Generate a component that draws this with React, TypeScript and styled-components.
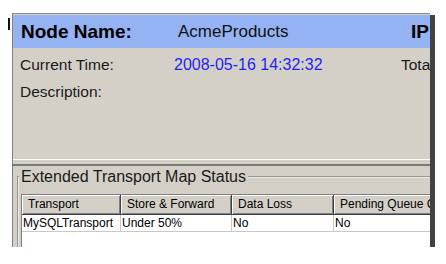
import React from 'react';
import styled, { createGlobalStyle } from 'styled-components';

const GlobalStyle = createGlobalStyle`
  html, body {
    margin: 0;
    padding: 0;
    background: #ffffff;
  }
  body {
    font-family: "Liberation Sans", Arial, sans-serif;
    color: #111;
  }
`;

const columns = [
  { title: 'Transport', width: 99 },
  { title: 'Store & Forward', width: 111 },
  { title: 'Data Loss', width: 102 },
  { title: 'Pending Queue Count', width: 140 },
];

const rows = [['MySQLTransport', 'Under 50%', 'No', 'No']];

export default function App() {
  return (
    <>
      <GlobalStyle />
      <Stage>
        <Edge />
        <Window>
          <Header>
            <HeadLabel>Node Name:</HeadLabel>
            <HeadValue>AcmeProducts</HeadValue>
            <HeadLabel>IP</HeadLabel>
          </Header>
          <Info>
            <InfoRow>
              <Label>Current Time:</Label>
              <Value $accent>2008-05-16 14:32:32</Value>
              <Label>Total</Label>
            </InfoRow>
            <InfoRow>
              <Label>Description:</Label>
            </InfoRow>
          </Info>
          <Splitter />
          <GroupArea>
            <Group>
              <Legend>Extended Transport Map Status</Legend>
              <ListView>
                <ListHead>
                  {columns.map((c) => (
                    <HeadCell key={c.title}>{c.title}</HeadCell>
                  ))}
                </ListHead>
                {rows.map((r, i) => (
                  <ListRow key={i}>
                    {r.map((v, j) => (
                      <Cell key={j}>{v}</Cell>
                    ))}
                  </ListRow>
                ))}
              </ListView>
            </Group>
          </GroupArea>
        </Window>
      </Stage>
    </>
  );
}

const Stage = styled.div`
  display: flex;
  align-items: flex-start;
  padding-top: 13px;
`;

const Edge = styled.div`
  width: 2px;
  height: 12px;
  margin: 5px 2px 0 8px;
  background: #111;
`;

const Window = styled.div`
  box-sizing: border-box;
  width: 418px;
  height: 234px;
  overflow: hidden;
  display: flex;
  flex-direction: column;
  background: #d4d0c8;
  border-top: 1px solid #8a8a8a;
  border-left: 1px solid #808080;
  padding-top: 1px;
  box-shadow: 5px 2px 0 #424242, 2px 5px 0 #424242;
`;

const Header = styled.div`
  flex-shrink: 0;
  display: grid;
  grid-template-columns: 157px 233px auto;
  align-items: center;
  height: 33px;
  padding-left: 8px;
  background: #95b3f3;
  white-space: nowrap;
`;

const HeadLabel = styled.span`
  font-size: 19px;
  font-weight: bold;
  color: #000;
`;

const HeadValue = styled.span`
  font-size: 17px;
  color: #111;
`;

const Info = styled.div`
  flex-shrink: 0;
  height: 111px;
  padding: 3px 0 0 7px;
  box-sizing: border-box;
`;

const InfoRow = styled.div`
  display: grid;
  grid-template-columns: 154px 227px auto;
  height: 27px;
  align-items: center;
  white-space: nowrap;
  font-size: 15.5px;
`;

const Label = styled.span`
  color: #1a1a1a;
`;

const Value = styled.span<{ $accent?: boolean }>`
  font-size: 16px;
  color: ${(p) => (p.$accent ? '#1f1ff5' : '#1a1a1a')};
`;

const Splitter = styled.div`
  flex-shrink: 0;
  height: 4px;
  border-top: 1px solid #ffffff;
  border-bottom: 2px solid #7a7a7a;
`;

const GroupArea = styled.div`
  flex-shrink: 0;
  padding: 2px 0 0 4px;
`;

const Group = styled.fieldset`
  margin: 0;
  width: 440px;
  min-width: 0;
  padding: 8px 0 0 2px;
  border: 2px groove #ece9e2;
  border-right: none;
  border-bottom: none;
`;

const Legend = styled.legend`
  font-size: 16px;
  padding: 0 2px;
  margin-left: -2px;
  color: #1a1a1a;
`;

const ListView = styled.div`
  height: 80px;
  background: #ffffff;
  border-top: 1px solid #7f7f7f;
  border-left: 1px solid #7f7f7f;
  font-size: 12px;
  white-space: nowrap;
`;

const ListHead = styled.div`
  display: grid;
  grid-template-columns: ${columns.map((c) => `${c.width}px`).join(' ')};
`;

const HeadCell = styled.div`
  box-sizing: border-box;
  height: 20px;
  line-height: 19px;
  padding-left: 6px;
  overflow: hidden;
  background: #d4d0c8;
  color: #000;
  border-right: 1px solid #404040;
  border-bottom: 1px solid #404040;
  box-shadow: inset 1px 1px 0 #ffffff, inset -1px -1px 0 #808080;
`;

const ListRow = styled.div`
  display: grid;
  grid-template-columns: ${columns.map((c) => `${c.width}px`).join(' ')};
  border-bottom: 1px solid #c8c8c8;
`;

const Cell = styled.div`
  box-sizing: border-box;
  height: 16px;
  line-height: 16px;
  padding-left: 1px;
  color: #000;
  border-right: 1px solid #c8c8c8;
  overflow: hidden;
`;
